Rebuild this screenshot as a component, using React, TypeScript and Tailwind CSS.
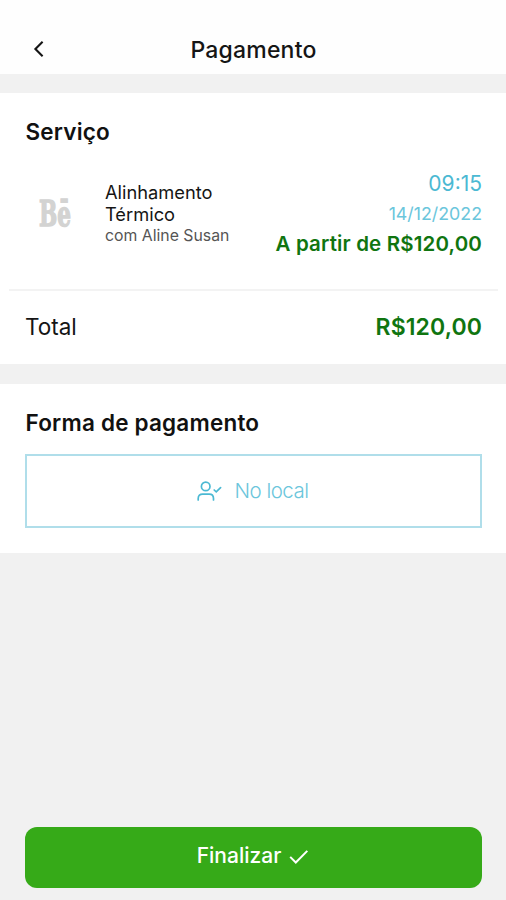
import type { ReactNode } from "react";

const booking = {
  service: "Alinhamento Térmico",
  professional: "Aline Susan",
  time: "09:15",
  date: "14/12/2022",
  price: "R$120,00",
};

function BackIcon() {
  return (
    <svg width="12" height="18" viewBox="0 0 12 18" fill="none" stroke="currentColor" strokeWidth="2.1">
      <path d="M10.6 1.8 3.4 9l7.2 7.2" />
    </svg>
  );
}

function UserCheckIcon() {
  return (
    <svg width="26" height="22" viewBox="0 0 26 22" fill="none" stroke="currentColor" strokeWidth="1.7" strokeLinecap="round">
      <circle cx="9.7" cy="6.4" r="4.3" />
      <path d="M2.2 20v-1.6c0-2.8 1.8-4.3 4.4-4.3h6.6c2.6 0 4.3 1.5 4.3 4.3V20" />
      <path d="m18.2 10 2 1.9 4.4-4.2" />
    </svg>
  );
}

function CheckIcon() {
  return (
    <svg width="20" height="15" viewBox="0 0 20 15" fill="none" stroke="currentColor" strokeWidth="2">
      <path d="m1.2 7.9 5.6 5.6L18.3 1.9" />
    </svg>
  );
}

function Logo() {
  return (
    <svg width="66" height="50" viewBox="0 0 66 50" fill="#d3d3d2" stroke="#d3d3d2" strokeWidth="1.5">
      <text
        x="2"
        y="38"
        textLength="32"
        lengthAdjust="spacingAndGlyphs"
        className="font-['DejaVu_Serif',serif] text-[36px] font-bold"
      >
        Bē
      </text>
    </svg>
  );
}

function Section({ title, children }: { title: string; children: ReactNode }) {
  return (
    <section className="bg-white">
      <h2 className="pt-[25px] pl-[25.5px] text-[22.5px] leading-[28px] font-semibold tracking-[0.2px] text-[#111]">
        {title}
      </h2>
      {children}
    </section>
  );
}

export default function App() {
  return (
    <div className="flex h-[900px] w-full flex-col bg-[#f1f1f1] font-['Inter',sans-serif] text-[#151515]">
      {/* Header */}
      <header className="grid h-[74px] grid-cols-[80px_1fr_79px] items-end bg-[#fefefe] pb-[9px]">
        <button className="flex h-[32px] items-center pl-[32px]" aria-label="Voltar">
          <BackIcon />
        </button>
        <h1 className="text-center text-[23px] leading-[30px] font-medium tracking-[0.2px]">Pagamento</h1>
      </header>

      <main className="mt-[19px] flex flex-col gap-5">
        <Section title="Serviço">
          <div className="flex h-[143px] items-start pt-[23px] pr-[24px] pl-[25px]">
            <div className="flex w-[80px] pt-[19px] pl-[12px]">
              <Logo />
            </div>
            <div className="w-[150px] pt-[12px]">
              <p className="w-[130px] text-[18.3px] leading-[22px]">{booking.service}</p>
              <p className="text-[15.8px] leading-[21px] text-[#555]">com {booking.professional}</p>
            </div>
            <div className="flex flex-1 flex-col items-end whitespace-nowrap">
              <span className="text-[21px] leading-[30px] text-[#4bb9d3]">{booking.time}</span>
              <span className="text-[17.8px] leading-[30px] text-[#6bc6dc]">{booking.date}</span>
              <span className="text-[20.5px] leading-[30px] font-semibold tracking-[0.15px] text-[#107510]">
                A partir de {booking.price}
              </span>
            </div>
          </div>
          <div className="mr-[8px] ml-[9px] border-t-2 border-[#f3f3f3]" />
          <div className="flex h-[73px] items-center justify-between pr-[24px] pb-[1px] pl-[25px]">
            <span className="text-[22.5px]">Total</span>
            <span className="text-[23px] font-semibold tracking-[0.1px] text-[#107510]">{booking.price}</span>
          </div>
        </Section>

        <Section title="Forma de pagamento">
          <div className="px-6 pt-[17px] pb-[25px] pl-[25px]">
            <button className="flex h-[74px] w-full items-center justify-center gap-3 border-2 border-[#b0deea] pr-[2px] text-[#4bb9d3]">
              <UserCheckIcon />
              <span className="text-[20.5px] font-light tracking-[-0.5px] text-[#6bc6dc]">No local</span>
            </button>
          </div>
        </Section>
      </main>

      <footer className="mt-auto px-6 pb-3 pl-[25px]">
        <button className="flex h-[61px] w-full items-center justify-center gap-[8px] rounded-[12px] bg-[#36aa18] pr-[1px] pb-[3px] text-white">
          <span className="text-[21px] font-medium">Finalizar</span>
          <CheckIcon />
        </button>
      </footer>
    </div>
  );
}
